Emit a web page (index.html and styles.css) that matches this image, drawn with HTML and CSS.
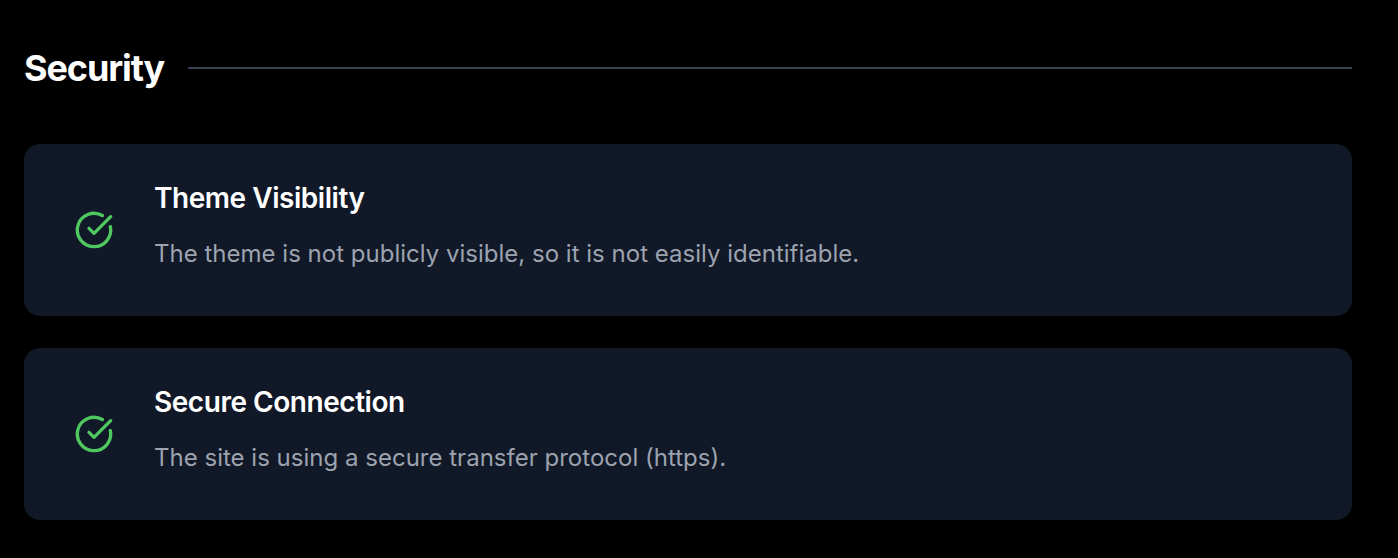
FILE: index.html
```html
<!DOCTYPE html>
<html lang="en">
<head>
    <meta charset="UTF-8">
    <meta name="viewport" content="width=device-width, initial-scale=1.0">
    <title>Security</title>
    <link rel="stylesheet" href="styles.css">
</head>
<body>
    <section class="security">
        <div class="section-header">
            <h2 class="section-title">Security</h2>
            <div class="section-line"></div>
        </div>

        <div class="card-list">
            <div class="card">
                <svg class="check-icon" viewBox="0 0 24 24" fill="none" stroke="currentColor" stroke-width="2" stroke-linecap="round" stroke-linejoin="round">
                    <path d="M21.801 10A10 10 0 1 1 17 3.335"/>
                    <path d="m9 11 3 3L22 4"/>
                </svg>
                <div class="card-content">
                    <h3 class="card-title">Theme Visibility</h3>
                    <p class="card-text">The theme is not publicly visible, so it is not easily identifiable.</p>
                </div>
            </div>

            <div class="card">
                <svg class="check-icon" viewBox="0 0 24 24" fill="none" stroke="currentColor" stroke-width="2" stroke-linecap="round" stroke-linejoin="round">
                    <path d="M21.801 10A10 10 0 1 1 17 3.335"/>
                    <path d="m9 11 3 3L22 4"/>
                </svg>
                <div class="card-content">
                    <h3 class="card-title">Secure Connection</h3>
                    <p class="card-text">The site is using a secure transfer protocol (https).</p>
                </div>
            </div>
        </div>
    </section>
</body>
</html>
```

FILE: styles.css
```css
* {
    margin: 0;
    padding: 0;
    box-sizing: border-box;
}

body {
    font-family: Inter, 'Liberation Sans', sans-serif;
    background: #000;
    color: #fff;
}

.security {
    padding: 40px 46px 38px 24px;
}

.section-header {
    display: flex;
    align-items: center;
    gap: 24px;
    height: 56px;
    margin-bottom: 48px;
}

.section-title {
    width: 140px;
    font-size: 36px;
    font-weight: 700;
    line-height: 56px;
    letter-spacing: -1.1px;
    white-space: nowrap;
}

.section-line {
    flex: 1;
    height: 2px;
    background: #374151;
}

.card-list {
    display: flex;
    flex-direction: column;
    gap: 32px;
}

.card {
    display: flex;
    align-items: center;
    gap: 40px;
    height: 172px;
    padding: 0 50px;
    background: #111827;
    border-radius: 16px;
}

.check-icon {
    width: 40px;
    height: 40px;
    flex-shrink: 0;
    color: #50c860;
}

.card-content {
    height: 108px;
}

.card-title {
    margin-bottom: 12px;
    font-size: 28px;
    font-weight: 600;
    line-height: 44px;
    letter-spacing: -0.46px;
    white-space: nowrap;
}

.card-text {
    color: #9ca3af;
    font-size: 24px;
    line-height: 44px;
    letter-spacing: 0.01px;
    white-space: nowrap;
}
```
